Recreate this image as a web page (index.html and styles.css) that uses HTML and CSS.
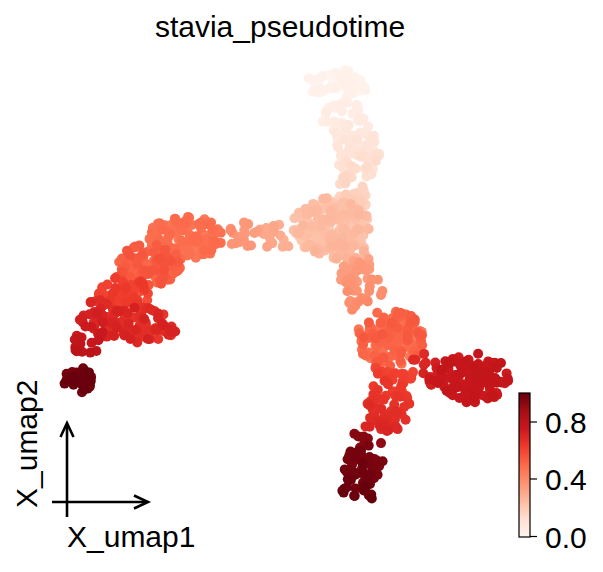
FILE: index.html
```html
<!DOCTYPE html>
<html>
<head>
<meta charset="utf-8">
<link rel="stylesheet" href="styles.css">
</head>
<body>
<div class="figure">
  <h1 class="title">stavia_pseudotime</h1>
  <svg class="plot" width="603" height="519" viewBox="0 53 603 519" xmlns="http://www.w3.org/2000/svg">
    <defs>
      <linearGradient id="reds" x1="0" y1="1" x2="0" y2="0">
        <stop offset="0" stop-color="#fff5f0"/>
        <stop offset="0.125" stop-color="#fee0d2"/>
        <stop offset="0.25" stop-color="#fcbba1"/>
        <stop offset="0.375" stop-color="#fc9272"/>
        <stop offset="0.5" stop-color="#fb6a4a"/>
        <stop offset="0.625" stop-color="#ef3b2c"/>
        <stop offset="0.75" stop-color="#cb181d"/>
        <stop offset="0.875" stop-color="#a50f15"/>
        <stop offset="1" stop-color="#67000d"/>
      </linearGradient>
    </defs>
    <g id="points"></g>
    <g class="axes">
      <line x1="67" y1="517" x2="67" y2="424"/>
      <polyline points="60.5,437 67,423 73.5,437"/>
      <line x1="52" y1="502" x2="147" y2="502"/>
      <polyline points="134,495.5 148,502 134,508.5"/>
    </g>
    <text class="axis-label" x="67" y="547">X_umap1</text>
    <text class="axis-label" transform="translate(37 508) rotate(-90)">X_umap2</text>
    <g class="colorbar">
      <rect class="cbar" x="519" y="393" width="11" height="144" fill="url(#reds)"/>
      <line x1="530" y1="422" x2="537" y2="422"/>
      <line x1="530" y1="479" x2="537" y2="479"/>
      <line x1="530" y1="536.5" x2="537" y2="536.5"/>
    </g>
    <text class="tick-label" x="545" y="433">0.8</text>
    <text class="tick-label" x="545" y="490">0.4</text>
    <text class="tick-label" x="545" y="547.5">0.0</text>
  </svg>
</div>
<script src="app.js"></script>
</body>
</html>
```

FILE: styles.css
```css
html, body {
  margin: 0;
  padding: 0;
  background: #ffffff;
}
.figure {
  width: 603px;
  height: 572px;
  overflow: hidden;
  font-family: "Liberation Sans", Arial, sans-serif;
  color: #000000;
}
.title {
  margin: 0;
  height: 53px;
  line-height: 53px;
  font-size: 30px;
  font-weight: normal;
  text-align: center;
  padding-right: 43px;
  white-space: nowrap;
}
.plot {
  display: block;
}
.axes line,
.axes polyline {
  stroke: #000000;
  stroke-width: 2.6;
  fill: none;
  stroke-linecap: butt;
  stroke-linejoin: miter;
}
.axis-label,
.tick-label {
  font-family: "Liberation Sans", Arial, sans-serif;
  font-size: 30px;
  fill: #000000;
}
.cbar {
  stroke: #000000;
  stroke-width: 1.2;
}
.colorbar line {
  stroke: #000000;
  stroke-width: 1.2;
}
```

FILE: app.js
```js
(function () {
  var svgNS = "http://www.w3.org/2000/svg";
  var g = document.getElementById("points");
  var seed = 20240611;
  function rnd() {
    seed |= 0; seed = (seed + 0x6D2B79F5) | 0;
    var t = Math.imul(seed ^ (seed >>> 15), 1 | seed);
    t = (t + Math.imul(t ^ (t >>> 7), 61 | t)) ^ t;
    return ((t ^ (t >>> 14)) >>> 0) / 4294967296;
  }
  function gauss() {
    var u = rnd() || 1e-9, v = rnd();
    return Math.sqrt(-2 * Math.log(u)) * Math.cos(2 * Math.PI * v);
  }
  var stops = [[255,245,240],[254,224,210],[252,187,161],[252,146,114],[251,106,74],[239,59,44],[203,24,29],[165,15,21],[103,0,13]];
  function color(t) {
    t = Math.max(0, Math.min(1, t));
    var p = t * 8, i = Math.min(7, Math.floor(p)), f = p - i;
    var a = stops[i], b = stops[i + 1];
    var c = [0, 1, 2].map(function (k) { return Math.round(a[k] + (b[k] - a[k]) * f); });
    return "rgb(" + c.join(",") + ")";
  }
  var pts = [];
  function seg(x1, y1, x2, y2, hw, t1, t2, n) {
    var dx = x2 - x1, dy = y2 - y1, L = Math.hypot(dx, dy), nx = -dy / L, ny = dx / L;
    for (var i = 0; i < n; i++) {
      var s = rnd();
      var o = (rnd() * 2 - 1) * hw;
      var a = gauss() * 1.5;
      pts.push([x1 + dx * s + nx * o + dx / L * a, y1 + dy * s + ny * o + dy / L * a, t1 + (t2 - t1) * s + gauss() * 0.01]);
    }
  }
  function blob(cx, cy, rx, ry, t1, t2, n) {
    for (var i = 0; i < n; i++) {
      var r = Math.sqrt(rnd()), th = rnd() * 2 * Math.PI;
      var x = Math.cos(th) * r, y = Math.sin(th) * r;
      pts.push([cx + x * rx, cy + y * ry, t1 + (t2 - t1) * rnd()]);
    }
  }
  /* top branch */
  blob(337, 84, 34, 11, 0.0, 0.03, 50);
  blob(344, 75, 10, 5, 0.0, 0.02, 8);
  seg(333, 104, 352, 130, 19, 0.03, 0.07, 40);
  seg(352, 130, 360, 163, 21, 0.07, 0.12, 50);
  seg(359, 165, 351, 196, 15, 0.12, 0.17, 35);
  /* junction */
  blob(331, 227, 39, 29, 0.2, 0.26, 170);
  blob(347, 203, 20, 8, 0.16, 0.2, 22);
  blob(342, 252, 28, 8, 0.24, 0.28, 25);
  /* bridge */
  seg(290, 236, 228, 234, 12, 0.28, 0.38, 34);
  /* left arc */
  blob(186, 238, 37, 23, 0.45, 0.5, 110);
  blob(150, 265, 32, 21, 0.5, 0.57, 85);
  blob(124, 293, 27, 17, 0.57, 0.64, 55);
  blob(135, 325, 44, 18, 0.64, 0.72, 95);
  seg(98, 300, 84, 355, 13, 0.68, 0.8, 40);
  blob(78, 380, 14, 13, 0.96, 1.0, 36);
  /* lower right */
  seg(352, 262, 368, 302, 18, 0.33, 0.4, 48);
  blob(391, 338, 35, 28, 0.46, 0.55, 135);
  seg(396, 368, 382, 432, 21, 0.6, 0.7, 75);
  seg(412, 360, 438, 378, 12, 0.68, 0.74, 18);
  blob(472, 378, 37, 25, 0.74, 0.78, 125);
  seg(370, 440, 353, 500, 18, 0.94, 1.0, 70);

  pts.sort(function (a, b) { return a[2] - b[2]; });
  var frag = document.createDocumentFragment();
  pts.forEach(function (p) {
    var c = document.createElementNS(svgNS, "circle");
    c.setAttribute("cx", p[0].toFixed(1));
    c.setAttribute("cy", p[1].toFixed(1));
    c.setAttribute("r", "5");
    c.setAttribute("fill", color(p[2]));
    frag.appendChild(c);
  });
  g.appendChild(frag);
})();
```
